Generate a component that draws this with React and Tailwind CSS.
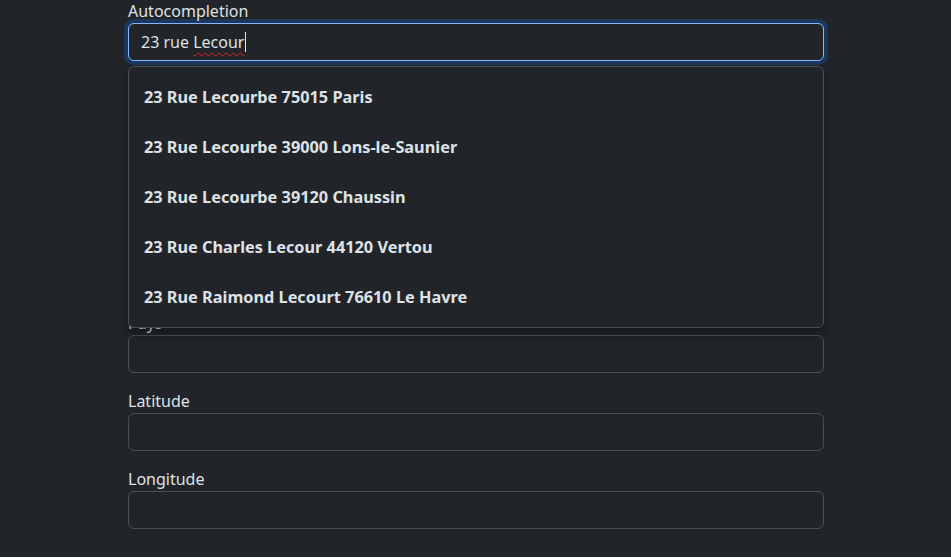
import React from 'react';

const suggestions = [
  '23 Rue Lecourbe 75015 Paris',
  '23 Rue Lecourbe 39000 Lons-le-Saunier',
  '23 Rue Lecourbe 39120 Chaussin',
  '23 Rue Charles Lecour 44120 Vertou',
  '23 Rue Raimond Lecourt 76610 Le Havre',
];

// the dropdown covers the first fields of the form
const fields = ['Adresse', 'Code postal', 'Ville', 'Pays', 'Latitude', 'Longitude'];

const Field = ({ label }) => (
  <div className="mb-4">
    <label className="block h-6 leading-6 text-[16px]">{label}</label>
    <div className="h-[38px] rounded-md border border-[#495057] bg-[#212529]" />
  </div>
);

const App = () => {
  return (
    <div
      className="min-h-[558px] bg-[#212529] text-[#dee2e6]"
      style={{ fontFamily: '"Noto Sans", "Open Sans", sans-serif' }}
    >
      <div className="ml-[128px] w-[696px] -mt-px">
        <div className="relative mb-4">
          <label className="block h-6 leading-6 text-[16px]">Autocompletion</label>
          <div className="flex h-[38px] items-center rounded-md border border-[#86b7fe] bg-[#212529] px-3 text-[16px] shadow-[0_0_0_4px_rgba(13,110,253,0.25)]">
            <span>23 rue&nbsp;</span>
            <span className="underline decoration-wavy decoration-[#e02020] decoration-1 underline-offset-4">Lecour</span>
            <span className="ml-px h-[20px] w-px bg-[#dee2e6]" />
          </div>

          <div className="absolute left-0 right-0 top-[67px] z-10 rounded-md border border-[#495057] bg-[#212529] pt-[5px] pb-[5px] shadow-[0_6px_12px_rgba(0,0,0,0.35)]">
            {suggestions.map((s) => (
              <div key={s} className="flex h-[50px] items-center px-[15px] text-[16.3px] font-bold">
                {s}
              </div>
            ))}
          </div>
        </div>

        {fields.map((f) => (
          <Field key={f} label={f} />
        ))}
      </div>
    </div>
  );
};

export default App;
